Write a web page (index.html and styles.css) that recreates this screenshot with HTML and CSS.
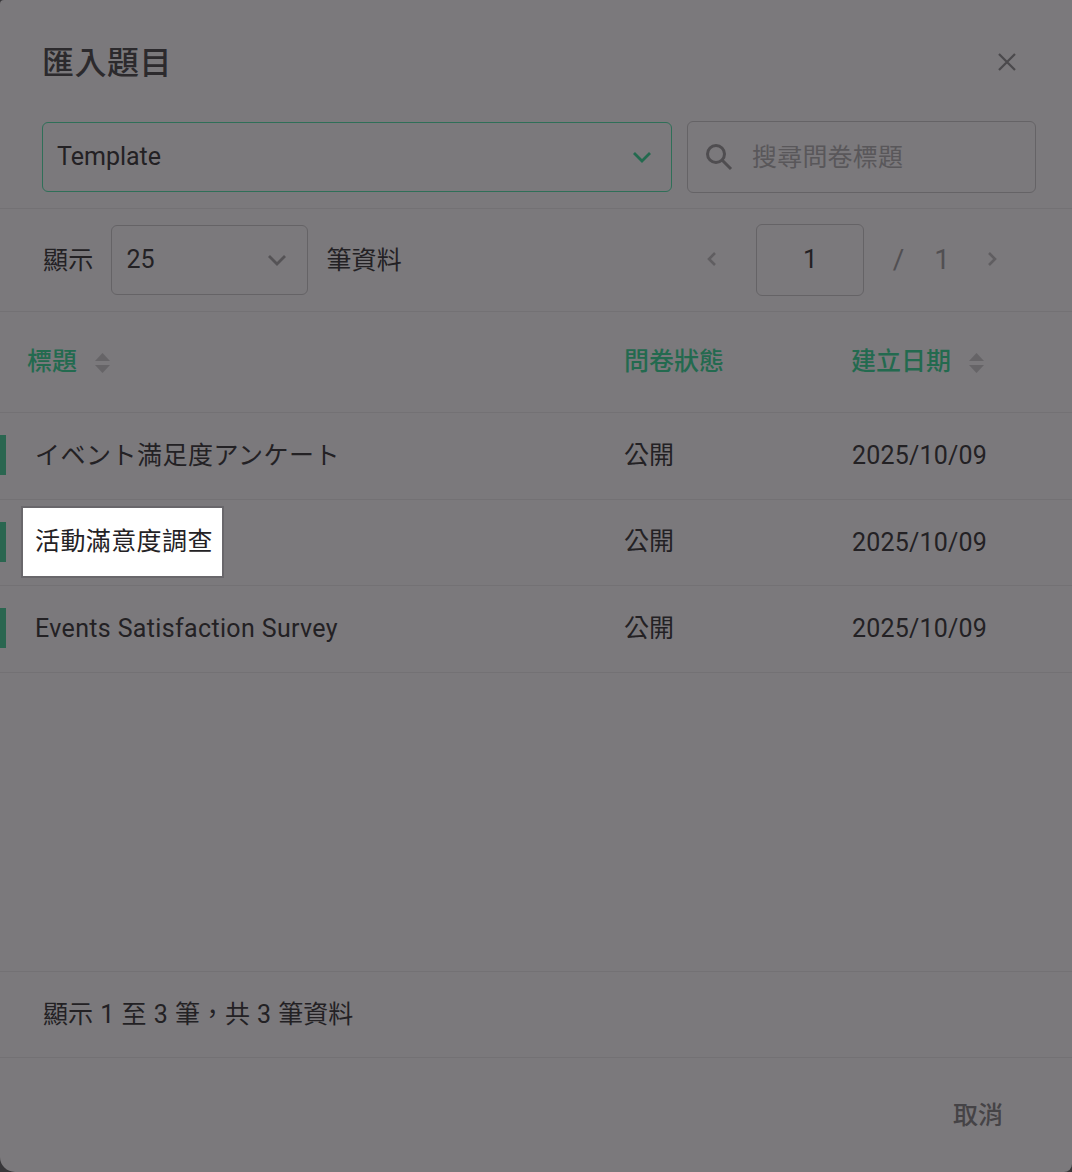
FILE: index.html
```html
<!DOCTYPE html>
<html lang="zh-TW">
<head>
    <meta charset="UTF-8">
    <meta name="viewport" content="width=device-width, initial-scale=1.0">
    <title>匯入題目</title>
    <link rel="stylesheet" href="styles.css">
</head>
<body>
    <div class="modal">
        <div class="modal-header">
            <h1>匯入題目</h1>
            <svg class="close-icon" width="20" height="20" viewBox="0 0 20 20"><path d="M2 2 L18 18 M18 2 L2 18"/></svg>
        </div>
        <div class="filters">
            <div class="field type-select">
                <span>Template</span>
                <svg class="chevron" width="20" height="12" viewBox="0 0 20 12"><path d="M2 2 L10 10 L18 2"/></svg>
            </div>
            <div class="field search-box">
                <svg class="search-icon" width="28" height="28" viewBox="0 0 28 28"><circle cx="11" cy="11" r="8.5"/><path d="M17 17 L26 26"/></svg>
                <span>搜尋問卷標題</span>
            </div>
        </div>
        <div class="toolbar">
            <div class="page-size">
                <span class="cjk">顯示</span>
                <div class="field size-select">
                    <span>25</span>
                    <svg class="chevron" width="20" height="12" viewBox="0 0 20 12"><path d="M2 2 L10 10 L18 2"/></svg>
                </div>
                <span class="cjk">筆資料</span>
            </div>
            <div class="pager">
                <svg class="page-arrow arrow-prev" width="10" height="16" viewBox="0 0 10 16"><path d="M8 2 L2 8 L8 14"/></svg>
                <div class="field page-input">1</div>
                <span class="page-slash">/</span>
                <span class="page-total">1</span>
                <svg class="page-arrow arrow-next" width="10" height="16" viewBox="0 0 10 16"><path d="M2 2 L8 8 L2 14"/></svg>
            </div>
        </div>
        <div class="table">
            <div class="row head-row">
                <div class="head-title cjk">標題
                    <svg class="sort-icon" width="15" height="20" viewBox="0 0 15 20"><path d="M7.5 0 L15 8 L0 8 Z M0 12 L15 12 L7.5 20 Z"/></svg>
                </div>
                <div class="cjk">問卷狀態</div>
                <div class="head-date cjk">建立日期
                    <svg class="sort-icon" width="15" height="20" viewBox="0 0 15 20"><path d="M7.5 0 L15 8 L0 8 Z M0 12 L15 12 L7.5 20 Z"/></svg>
                </div>
            </div>
            <div class="row body-row">
                <div class="title-cell cjk title-jp">イベント満足度アンケート</div>
                <div class="cjk">公開</div>
                <div class="date-cell">2025/10/09</div>
            </div>
            <div class="row body-row">
                <div class="title-cell"><span class="highlight">活動滿意度調查</span></div>
                <div class="cjk">公開</div>
                <div class="date-cell">2025/10/09</div>
            </div>
            <div class="row body-row">
                <div class="title-cell title-en">Events Satisfaction Survey</div>
                <div class="cjk">公開</div>
                <div class="date-cell">2025/10/09</div>
            </div>
        </div>
        <div class="table-info"><span class="cjk">顯示 1 至 3 筆，共 3 筆資料</span></div>
        <div class="actions">
            <span class="cancel cjk">取消</span>
        </div>
    </div>
</body>
</html>
```

FILE: styles.css
```css
* {
    box-sizing: border-box;
}
body {
    margin: 0;
    background-color: #38373a;
    font-family: Roboto, "Noto Sans CJK TC", sans-serif;
    font-size: 25px;
    color: #232124;
}
/* CJK glyphs sit low in the line box next to the Roboto strut */
.cjk {
    padding-bottom: 6px;
}
.modal {
    display: flex;
    flex-direction: column;
    height: 100vh;
    background-color: #7b797c;
    border-radius: 4px 0 8px 15px;
    overflow: hidden;
}
.modal-header {
    display: flex;
    justify-content: space-between;
    align-items: center;
    height: 122px;
    padding: 0 55px 0 42px;
}
.modal-header h1 {
    margin: 0;
    padding-bottom: 2px;
    font-size: 32px;
    font-weight: 500;
    letter-spacing: 0.5px;
    color: #2c2a2d;
}
.close-icon {
    margin-top: 2px;
}
.close-icon path {
    fill: none;
    stroke: #4b494c;
    stroke-width: 2.2;
}
.filters {
    display: flex;
    align-items: center;
    gap: 15px;
    height: 87px;
    padding: 0 36px 16px 42px;
    border-bottom: 1px solid #737174;
}
.field {
    display: flex;
    align-items: center;
    border: 1px solid #656366;
    border-radius: 6px;
}
.type-select {
    justify-content: space-between;
    flex: 1;
    height: 70px;
    padding: 0 19px 0 14px;
    border-color: #2f6f58;
}
.type-select span {
    padding-bottom: 2px;
}
.chevron path {
    fill: none;
    stroke: #555356;
    stroke-width: 2.8;
}
.type-select .chevron path {
    stroke: #236a4f;
}
.search-box {
    width: 349px;
    height: 72px;
    padding: 0 17px;
    gap: 19px;
    color: #59575a;
}
.search-box span {
    padding-bottom: 5px;
    letter-spacing: 0.2px;
}
.search-icon {
    flex-shrink: 0;
}
.search-icon circle,
.search-icon path {
    fill: none;
    stroke: #4f4d50;
    stroke-width: 3;
}
.toolbar {
    display: flex;
    justify-content: space-between;
    align-items: center;
    height: 103px;
    padding: 0 75px 0 43px;
    border-bottom: 1px solid #737174;
}
.page-size {
    display: flex;
    align-items: center;
    gap: 18px;
}
.page-size .cjk {
    padding-bottom: 4px;
    letter-spacing: 0.2px;
}
.size-select {
    justify-content: space-between;
    width: 197px;
    height: 70px;
    padding: 0 20px 0 14px;
}
.size-select span {
    padding-bottom: 2px;
}
.pager {
    display: flex;
    align-items: center;
}
.page-arrow {
    margin-bottom: 2px;
}
.page-arrow path {
    fill: none;
    stroke: #605e61;
    stroke-width: 2.6;
}
.page-input {
    justify-content: center;
    width: 108px;
    height: 72px;
    margin: 0 29px 0 39px;
    padding: 0 0 2px 1px;
    font-size: 26px;
}
.page-slash {
    padding-bottom: 2px;
    font-size: 28px;
    color: #514f52;
    margin-right: 30px;
}
.page-total {
    padding-bottom: 2px;
    font-size: 28px;
    color: #514f52;
    margin-right: 37px;
}
.table {
    flex: 1;
}
.row {
    display: grid;
    grid-template-columns: 624px 228px 1fr;
    align-items: center;
    border-bottom: 1px solid #737174;
}
.head-row {
    height: 101px;
    font-weight: 500;
    color: #236a4f;
}
.head-title {
    padding-left: 27px;
}
.head-date {
    margin-left: -1px;
}
.sort-icon {
    margin-left: 12px;
    vertical-align: -3px;
}
.sort-icon path {
    fill: #666467;
}
.body-row {
    position: relative;
    height: 86.5px;
}
.body-row::before {
    content: "";
    position: absolute;
    left: 0;
    top: 22px;
    width: 6px;
    height: 40px;
    background-color: #2a6650;
}
.title-cell {
    padding-left: 35px;
}
.title-jp {
    letter-spacing: 0.5px;
}
.title-en {
    letter-spacing: 0.35px;
}
.date-cell {
    letter-spacing: 0.2px;
}
.highlight {
    display: inline-block;
    position: relative;
    margin-left: -14px;
    padding: 16px 9px 16px 12px;
    line-height: 36px;
    letter-spacing: 0.4px;
    background-color: #fff;
    border: 2px solid #69676b;
    color: #242225;
}
.table-info {
    display: flex;
    align-items: center;
    height: 87px;
    padding-left: 43px;
    border-top: 1px solid #737174;
    border-bottom: 1px solid #737174;
    word-spacing: 1px;
}
.actions {
    display: flex;
    justify-content: flex-end;
    align-items: center;
    height: 114px;
    padding-right: 69px;
}
.cancel {
    padding-bottom: 4px;
    font-weight: 500;
    color: #454346;
}
```
